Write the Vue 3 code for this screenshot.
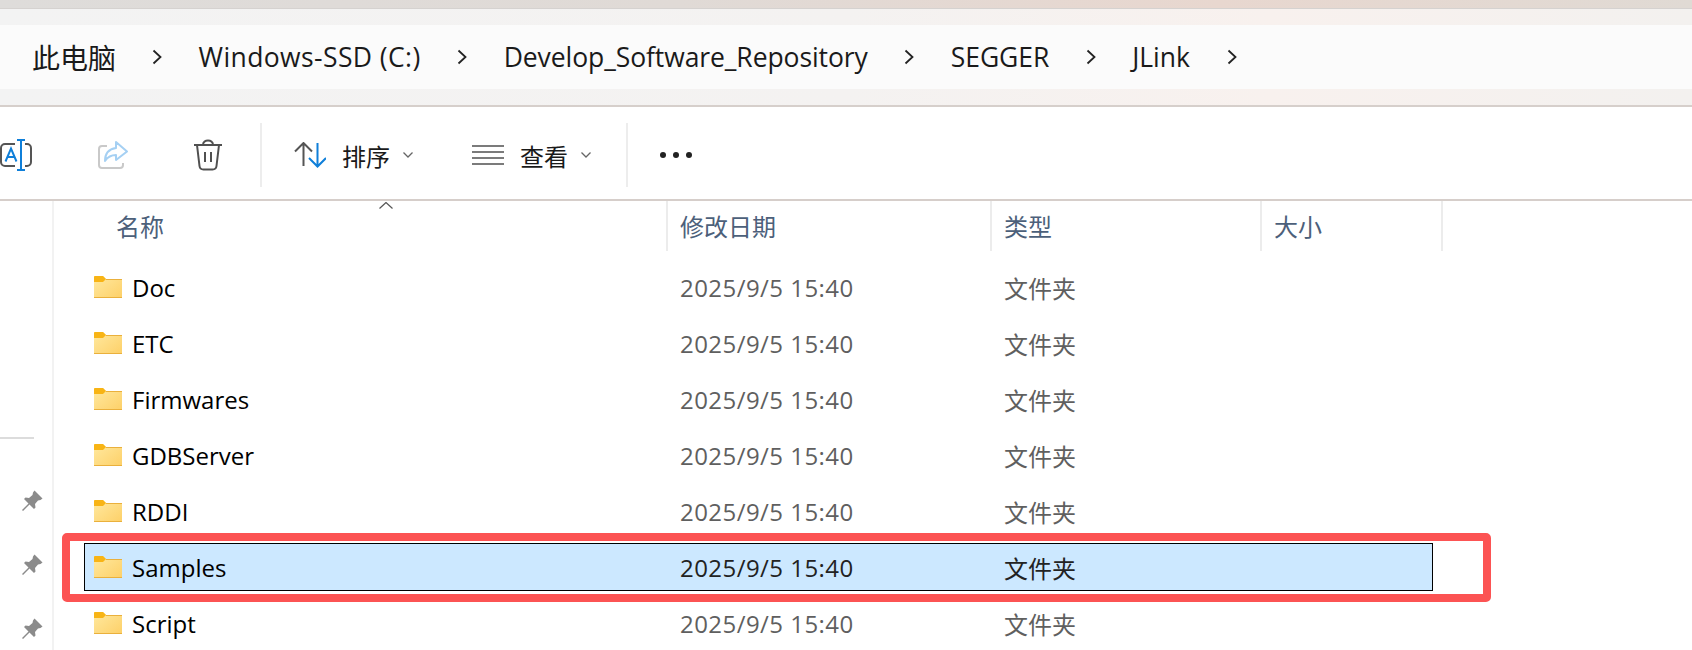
<script setup>
const crumbs = [
  { name: 'Windows-SSD (C:)', tweak: 'crumb--wide' },
  { name: 'Develop_Software_Repository', tweak: 'crumb--tight' },
  { name: 'SEGGER', tweak: 'crumb--tight' },
  { name: 'JLink', tweak: '' },
]

const columns = ['名称', '修改日期', '类型', '大小']

const folders = [
  { name: 'Doc' },
  { name: 'ETC' },
  { name: 'Firmwares' },
  { name: 'GDBServer' },
  { name: 'RDDI' },
  { name: 'Samples', selected: true },
  { name: 'Script' },
]
</script>

<template>
  <div class="explorer">
    <div class="titlebar"></div>

    <div class="address">
      <div class="address__inner">
        <span class="crumb crumb--home">此电脑</span>
        <template v-for="c in crumbs" :key="c.name">
          <svg class="chevron" viewBox="0 0 10 16"><path d="M1.5 1.5 8.5 8 1.5 14.5" /></svg>
          <span class="crumb" :class="c.tweak">{{ c.name }}</span>
        </template>
        <svg class="chevron" viewBox="0 0 10 16"><path d="M1.5 1.5 8.5 8 1.5 14.5" /></svg>
      </div>
    </div>

    <div class="toolbar">
      <svg class="tool tool--rename" viewBox="0 0 32 32" width="32" height="32">
        <path d="M15 5H5a4 4 0 0 0-4 4v14a4 4 0 0 0 4 4h10M25 5h2a4 4 0 0 1 4 4v14a4 4 0 0 1-4 4h-2" fill="none" stroke="#555" stroke-width="2" />
        <path d="M17 1h8M21 1v30M17 31h8" fill="none" stroke="#0f7fd9" stroke-width="2" />
        <path d="M5.500 22.500 11 9.500l5.500 13M7.500 18h7" fill="none" stroke="#0f7fd9" stroke-width="2" />
      </svg>
      <svg class="tool tool--share" viewBox="0 0 30 30" width="30" height="30">
        <path d="M9 6H4a3 3 0 0 0-3 3v16a3 3 0 0 0 3 3h18a3 3 0 0 0 3-3v-2" fill="none" stroke="#c9c9c9" stroke-width="2" />
        <path d="M18 2 29 11.5 18 20v-5c-5 0-8 1.500-11 6 0-8 4-12 11-13z" fill="#fff" stroke="#a5d0f3" stroke-width="2" stroke-linejoin="round" />
      </svg>
      <svg class="tool tool--trash" viewBox="0 0 30 32" width="30" height="32">
        <path d="M1 6h28M10 6c0-6 10-6 10 0M4 6l2.500 21a4 4 0 0 0 4 3.500h9a4 4 0 0 0 4-3.500L26 6M12 13v10M18 13v10" fill="none" stroke="#505050" stroke-width="2" />
      </svg>
      <div class="tool-sep tool-sep--first"></div>
      <svg class="tool tool--sort" viewBox="0 0 32 26" width="32" height="26">
        <path d="M1 9.500 9.500 1 18 9.500M9.500 1v23" fill="none" stroke="#555" stroke-width="2" />
        <path d="M15 16l8.500 8.500L32 16M23.500 1v23" fill="none" stroke="#0f7fd9" stroke-width="2" />
      </svg>
      <span class="tool-label">排序</span>
      <svg class="caret" viewBox="0 0 10 6"><path d="M.5.5 5 5 9.500.5" /></svg>
      <svg class="tool tool--view" viewBox="0 0 32 22" width="32" height="22">
        <path d="M0 2h32M0 8h32M0 14h32M0 20h32" fill="none" stroke="#505050" stroke-width="1.500" />
      </svg>
      <span class="tool-label">查看</span>
      <svg class="caret" viewBox="0 0 10 6"><path d="M.5.5 5 5 9.500.5" /></svg>
      <div class="tool-sep tool-sep--second"></div>
      <div class="dots"><i></i><i></i><i></i></div>
    </div>

    <div class="body">
      <aside class="side">
        <div class="side__rule"></div>
        <svg v-for="n in 3" :key="n" class="pin" viewBox="0 0 22 22" width="22" height="22">
          <path d="M13.500.5 21.500 8.500 19.500 10 17 10.500 14 14l.5 3.500L13 19 8.500 14.500 2 21 1 20 7.500 13.500 3 9 4.500 7.500 8 8l3.500-3 .5-2.500z" fill="#8b8b8b" />
        </svg>
      </aside>

      <main class="files">
        <svg class="sort-mark" viewBox="0 0 14 7"><path d="M.5 6.500 7 .5l6.500 6" /></svg>
        <div class="header">
          <div v-for="col in columns" :key="col" class="header__cell">{{ col }}</div>
        </div>
        <div class="list">
          <div
            v-for="f in folders"
            :key="f.name"
            class="row"
            :class="{ 'row--selected': f.selected }"
          >
            <div class="row__name">
              <svg class="folder" viewBox="0 0 28 22" width="28" height="22">
                <defs>
                  <linearGradient id="folderFill" x1="0" y1="0" x2="1" y2="1">
                    <stop offset="0" stop-color="#ffe9a0" />
                    <stop offset="1" stop-color="#fdd068" />
                  </linearGradient>
                </defs>
                <path d="M1 0h8l3 3h15a1 1 0 0 1 1 1v17a1 1 0 0 1-1 1H1a1 1 0 0 1-1-1V1a1 1 0 0 1 1-1z" fill="url(#folderFill)" />
                <path d="M0 21h28v1H0z" fill="#eab03c" />
                <path d="M12 3h16v1H12z" fill="#eab03c" />
                <path d="M1 0h8l3 3-3 3H0V1a1 1 0 0 1 1-1z" fill="#f8b415" />
              </svg>
              <span>{{ f.name }}</span>
            </div>
            <div class="row__cell row__cell--date">2025/9/5 15:40</div>
            <div class="row__cell">文件夹</div>
            <div class="row__cell"></div>
            <div v-if="f.selected" class="row__mark"></div>
          </div>
        </div>
      </main>
    </div>
  </div>
</template>

<style scoped>
.explorer {
  width: 1692px;
  height: 650px;
  overflow: hidden;
  background: #fff;
  font-family: "Open Sans", "Noto Sans CJK SC", sans-serif;
}

.titlebar {
  height: 8px;
  background: linear-gradient(90deg, #dedcda 0%, #e0dad6 40%, #e8d7cf 72%, #e0dad4 100%);
  border-bottom: 1px solid #d5d2d0;
}

.address {
  height: 98px;
  padding: 16px 0;
  box-sizing: border-box;
  background: linear-gradient(90deg, #f3f3f3 0%, #f4f2f1 50%, #f8f1ee 75%, #f3f1ef 100%);
  border-bottom: 2px solid #d6cfcb;
}

.address__inner {
  height: 64px;
  display: flex;
  align-items: center;
  padding-left: 32px;
  background: #fbfbfb;
  color: #1a1a1a;
  font-size: 26.500px;
}

.crumb--home {
  font-size: 28px;
}

.crumb--wide {
  letter-spacing: .4px;
}

.crumb--tight {
  letter-spacing: -.08px;
}

.chevron {
  width: 10px;
  height: 16px;
  margin: 0 36.500px;
  fill: none;
  stroke: #222;
  stroke-width: 1.800;
}

.chevron:first-of-type {
  margin-left: 36px;
}

.toolbar {
  height: 94px;
  box-sizing: border-box;
  padding-top: 4px;
  display: flex;
  align-items: center;
  border-bottom: 2px solid #d6ceca;
  color: #1a1a1a;
  font-size: 24px;
}

.tool {
  flex: none;
}

.tool--share {
  margin-left: 66px;
}

.tool--trash {
  margin-left: 65px;
}

.tool-sep {
  width: 2px;
  height: 64px;
  background: #ededed;
}

.tool-sep--first {
  margin-left: 37px;
}

.tool--sort {
  margin-left: 32px;
}

.tool--view {
  margin-left: 59px;
}

.tool-label {
  margin-left: 16px;
}

.caret {
  width: 10px;
  height: 6px;
  margin-left: 13px;
  fill: none;
  stroke: #666;
  stroke-width: 1.300;
}

.tool-sep--second {
  margin-left: 35px;
}

.dots {
  display: flex;
  gap: 7px;
  margin-left: 32px;
}

.dots i {
  width: 6px;
  height: 6px;
  border-radius: 50%;
  background: #222;
}

.body {
  display: flex;
  height: 449px;
}

.side {
  width: 54px;
  flex: none;
  box-sizing: border-box;
  border-right: 2px solid #f2f2f2;
  padding-top: 236px;
  display: flex;
  flex-direction: column;
  align-items: flex-start;
}

.side__rule {
  flex: none;
  width: 34px;
  height: 2px;
  background: #dcdcdc;
  margin-bottom: 51px;
}

.pin {
  flex: none;
  margin-left: 21px;
  margin-bottom: 42px;
}

.files {
  position: relative;
  flex: 1;
}

.sort-mark {
  position: absolute;
  left: 325px;
  top: 1px;
  width: 14px;
  height: 7px;
  fill: none;
  stroke: #555;
  stroke-width: 1.200;
}

.header {
  height: 50px;
  display: grid;
  grid-template-columns: 614px 324px 270px 181px;
  color: #4c607a;
  font-size: 24px;
}

.header__cell {
  display: flex;
  align-items: center;
  padding-left: 12px;
  padding-bottom: 2px;
  border-right: 2px solid #ececec;
}

.header__cell:first-child {
  padding-left: 62px;
}

.list {
  display: flex;
  flex-direction: column;
  gap: 8px;
  padding: 12px 0 0 30px;
}

.row {
  position: relative;
  flex: none;
  width: 1349px;
  height: 48px;
  box-sizing: border-box;
  display: grid;
  grid-template-columns: 582px 324px 270px 1fr;
  align-items: center;
  border: 1px solid transparent;
  color: #5f5f5f;
  font-size: 24px;
}

.row--selected {
  background: #cce8ff;
  border-color: #000;
  color: #222;
}

.row__name {
  display: flex;
  align-items: center;
  color: #000;
}

.folder {
  flex: none;
  margin: 0 10px 0 9px;
}

.row__cell {
  padding-left: 13px;
}

.row__cell--date {
  letter-spacing: .45px;
}

.row__mark {
  position: absolute;
  left: -23px;
  top: -11px;
  width: 1429px;
  height: 69px;
  box-sizing: border-box;
  border: 8px solid #fc5353;
  border-radius: 5px;
  pointer-events: none;
}
</style>
